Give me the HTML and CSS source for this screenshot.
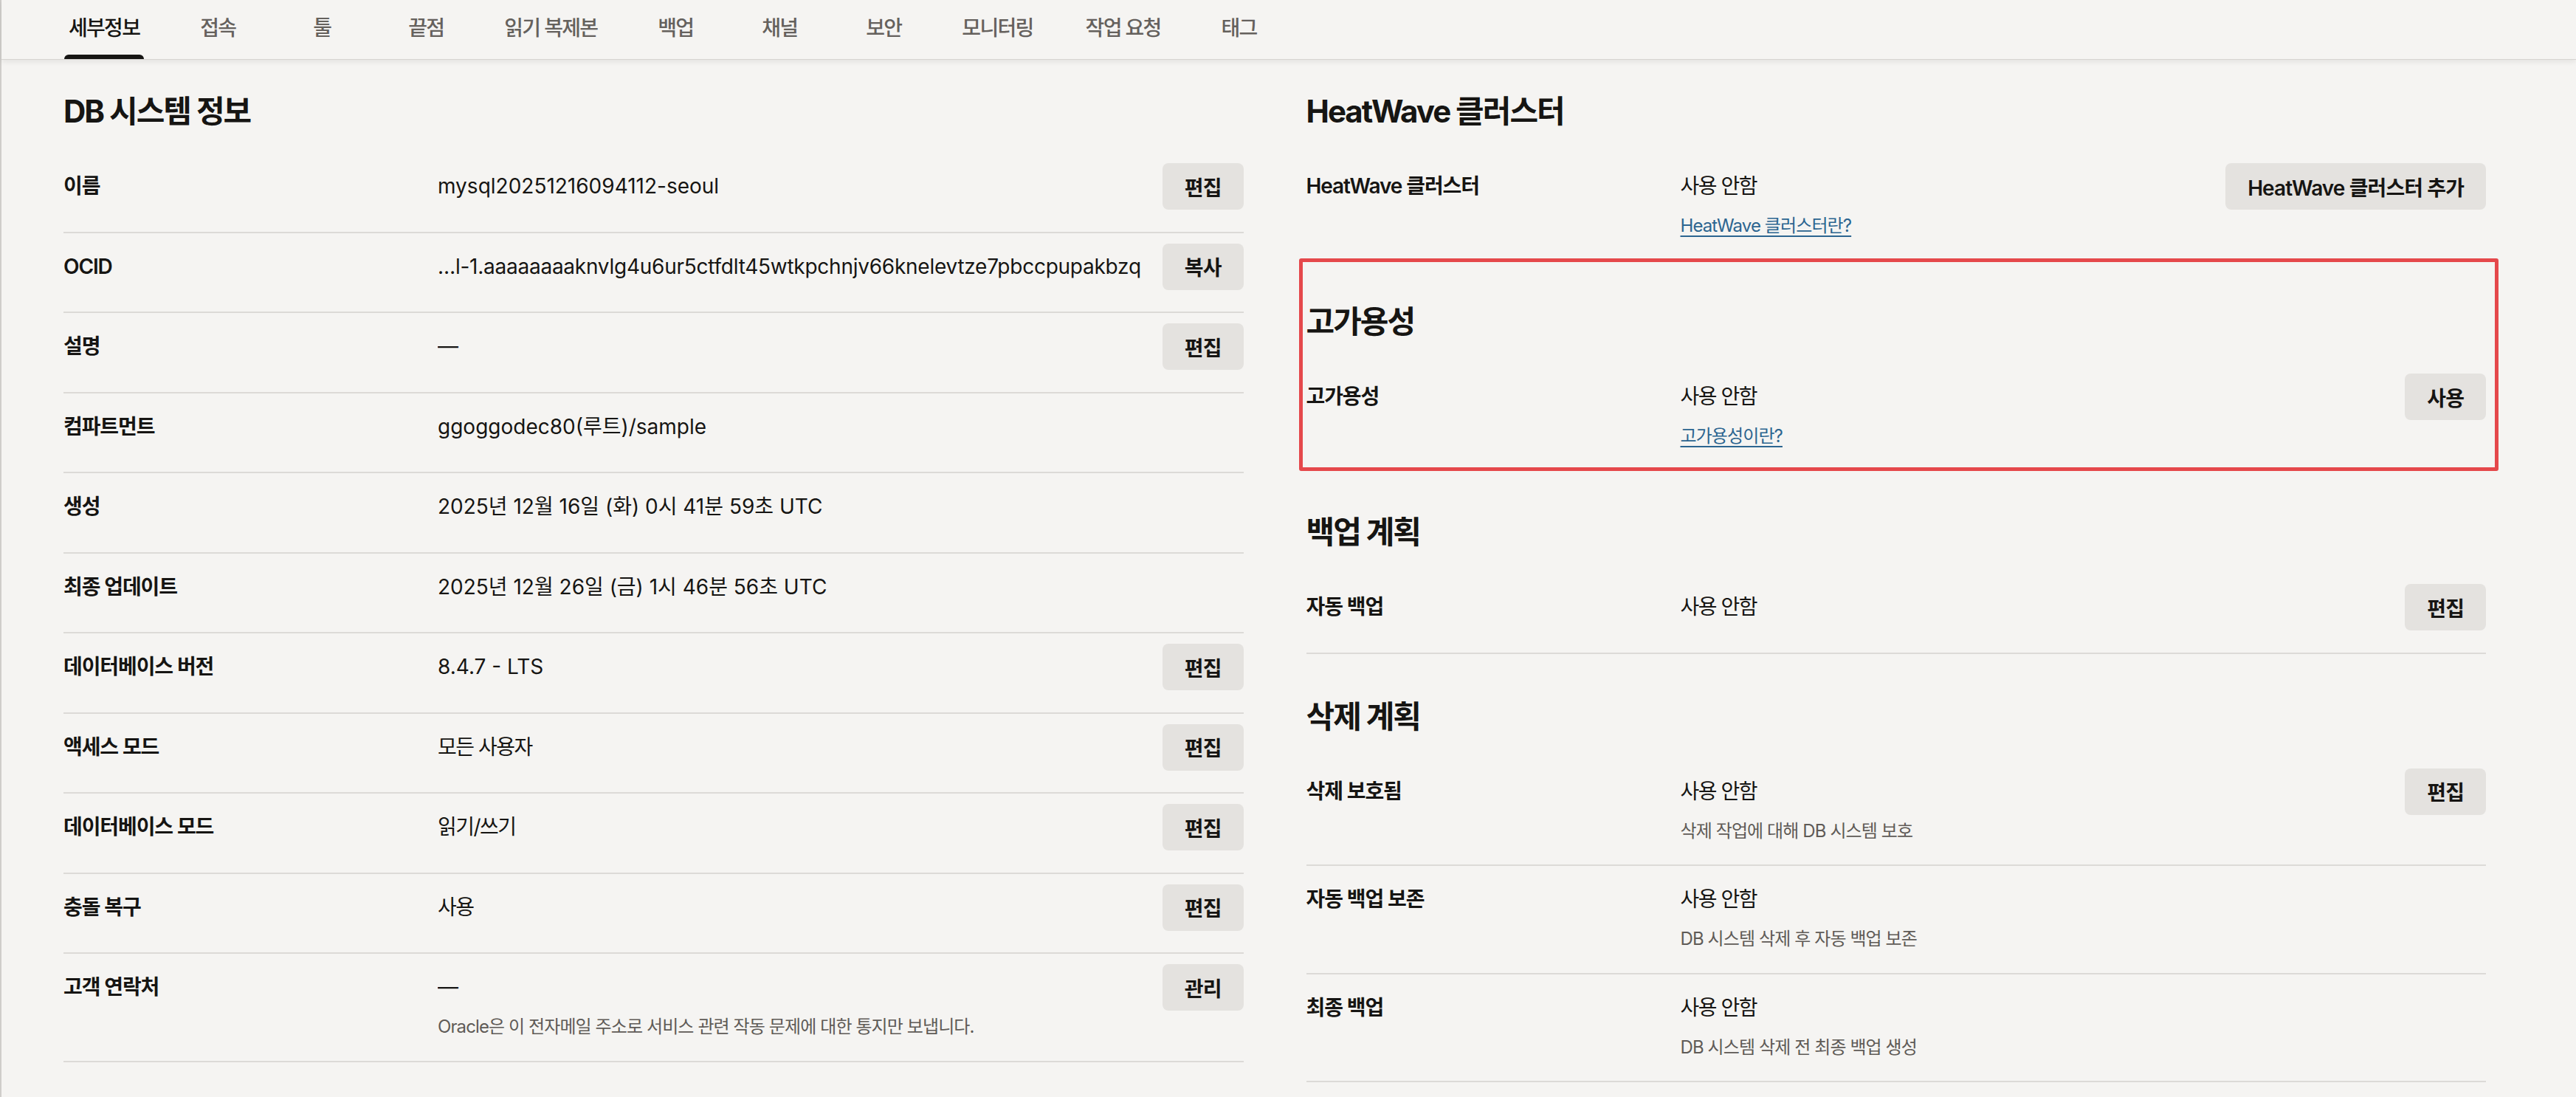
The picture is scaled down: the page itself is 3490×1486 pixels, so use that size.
FILE: index.html
```html
<!DOCTYPE html>
<html lang="ko">
<head>
<meta charset="utf-8">
<title>DB 시스템 세부정보</title>
<link rel="stylesheet" href="styles.css">
</head>
<body>
<div class="page">
  <nav class="tabs">
    <a class="tab active">세부정보</a>
    <a class="tab">접속</a>
    <a class="tab">툴</a>
    <a class="tab">끝점</a>
    <a class="tab">읽기 복제본</a>
    <a class="tab">백업</a>
    <a class="tab">채널</a>
    <a class="tab">보안</a>
    <a class="tab">모니터링</a>
    <a class="tab">작업 요청</a>
    <a class="tab">태그</a>
  </nav>

  <main class="content">
    <div class="col">
      <section class="section">
        <h2 class="heading">DB 시스템 정보</h2>
        <div class="row">
          <div class="label">이름</div>
          <div class="value"><div class="main">mysql20251216094112-seoul</div></div>
          <div class="action"><button class="btn">편집</button></div>
        </div>
        <div class="row">
          <div class="label">OCID</div>
          <div class="value"><div class="main ocid">…l-1.aaaaaaaaknvlg4u6ur5ctfdlt45wtkpchnjv66knelevtze7pbccpupakbzq</div></div>
          <div class="action"><button class="btn">복사</button></div>
        </div>
        <div class="row">
          <div class="label">설명</div>
          <div class="value"><div class="main">—</div></div>
          <div class="action"><button class="btn">편집</button></div>
        </div>
        <div class="row">
          <div class="label">컴파트먼트</div>
          <div class="value"><div class="main">ggoggodec80(루트)/sample</div></div>
        </div>
        <div class="row">
          <div class="label">생성</div>
          <div class="value"><div class="main">2025년 12월 16일 (화) 0시 41분 59초 UTC</div></div>
        </div>
        <div class="row">
          <div class="label">최종 업데이트</div>
          <div class="value"><div class="main">2025년 12월 26일 (금) 1시 46분 56초 UTC</div></div>
        </div>
        <div class="row">
          <div class="label">데이터베이스 버전</div>
          <div class="value"><div class="main">8.4.7 - LTS</div></div>
          <div class="action"><button class="btn">편집</button></div>
        </div>
        <div class="row">
          <div class="label">액세스 모드</div>
          <div class="value"><div class="main ko">모든 사용자</div></div>
          <div class="action"><button class="btn">편집</button></div>
        </div>
        <div class="row">
          <div class="label">데이터베이스 모드</div>
          <div class="value"><div class="main ko">읽기/쓰기</div></div>
          <div class="action"><button class="btn">편집</button></div>
        </div>
        <div class="row">
          <div class="label">충돌 복구</div>
          <div class="value"><div class="main ko">사용</div></div>
          <div class="action"><button class="btn">편집</button></div>
        </div>
        <div class="row">
          <div class="label">고객 연락처</div>
          <div class="value">
            <div class="main">—</div>
            <div class="desc">Oracle은 이 전자메일 주소로 서비스 관련 작동 문제에 대한 통지만 보냅니다.</div>
          </div>
          <div class="action"><button class="btn">관리</button></div>
        </div>
      </section>
    </div>

    <div class="col">
      <section class="section">
        <h2 class="heading">HeatWave 클러스터</h2>
        <div class="row noline">
          <div class="label">HeatWave 클러스터</div>
          <div class="value">
            <div class="main ko">사용 안함</div>
            <div class="desc"><a class="link">HeatWave 클러스터란?</a></div>
          </div>
          <div class="action"><button class="btn">HeatWave 클러스터 추가</button></div>
        </div>
      </section>

      <section class="section highlight">
        <h2 class="heading">고가용성</h2>
        <div class="row noline">
          <div class="label">고가용성</div>
          <div class="value">
            <div class="main ko">사용 안함</div>
            <div class="desc"><a class="link">고가용성이란?</a></div>
          </div>
          <div class="action"><button class="btn">사용</button></div>
        </div>
      </section>

      <section class="section">
        <h2 class="heading">백업 계획</h2>
        <div class="row">
          <div class="label">자동 백업</div>
          <div class="value"><div class="main ko">사용 안함</div></div>
          <div class="action"><button class="btn">편집</button></div>
        </div>
      </section>

      <section class="section">
        <h2 class="heading">삭제 계획</h2>
        <div class="row">
          <div class="label">삭제 보호됨</div>
          <div class="value">
            <div class="main ko">사용 안함</div>
            <div class="desc">삭제 작업에 대해 DB 시스템 보호</div>
          </div>
          <div class="action"><button class="btn">편집</button></div>
        </div>
        <div class="row">
          <div class="label">자동 백업 보존</div>
          <div class="value">
            <div class="main ko">사용 안함</div>
            <div class="desc">DB 시스템 삭제 후 자동 백업 보존</div>
          </div>
        </div>
        <div class="row">
          <div class="label">최종 백업</div>
          <div class="value">
            <div class="main ko">사용 안함</div>
            <div class="desc">DB 시스템 삭제 전 최종 백업 생성</div>
          </div>
        </div>
      </section>
    </div>
  </main>
</div>
</body>
</html>
```

FILE: styles.css
```css
* {
  box-sizing: border-box;
}

html, body {
  margin: 0;
  padding: 0;
  background: #f5f4f2;
}

body {
  font-family: Inter, "Noto Sans CJK KR", sans-serif;
  font-size: 28px;
  color: #161513;
}

.page {
  min-height: 1486px;
  border-left: 2px solid #cfcdca;
}

/* ---------- tabs ---------- */
.tabs {
  display: flex;
  gap: 59px;
  height: 81px;
  padding-left: 85px;
  border-bottom: 1px solid #d6d4d1;
  box-shadow: 0 3px 7px rgba(0, 0, 0, 0.07);
}

.tab {
  position: relative;
  min-width: 82px;
  padding: 0 6px;
  line-height: 76px;
  text-align: center;
  font-weight: 500;
  letter-spacing: -1.7px;
  color: #65615d;
  white-space: nowrap;
}

.tab.active {
  color: #161513;
}

.tab.active::after {
  content: "";
  position: absolute;
  left: 0;
  right: 0;
  bottom: 0;
  height: 6px;
  background: #161513;
  border-radius: 6px 6px 0 0;
}

/* ---------- content ---------- */
.content {
  display: grid;
  grid-template-columns: 1fr 1fr;
  column-gap: 85px;
  padding: 42px 122px 0 84px;
}

.section {
  position: relative;
  padding-top: 57px;
}

.col > .section:first-child {
  padding-top: 0;
}

.heading {
  margin: 0 0 28px;
  font-size: 42px;
  line-height: 56px;
  font-weight: 700;
  letter-spacing: -2px;
}

.row {
  display: grid;
  grid-template-columns: 507px 1fr auto;
  padding: 14px 0 29.5px;
  border-bottom: 2px solid #dcdad7;
}

.row.noline {
  border-bottom: 0;
  padding-bottom: 29px;
}

.label {
  line-height: 63px;
  font-weight: 600;
  letter-spacing: -1.1px;
  white-space: nowrap;
}

.value {
  min-width: 0;
}

.main {
  line-height: 63px;
  white-space: nowrap;
  overflow: hidden;
}

.main.ko {
  letter-spacing: -1.5px;
}

.main.ocid {
  letter-spacing: -0.25px;
}

.desc {
  margin-top: 6px;
  font-size: 24px;
  line-height: 32px;
  letter-spacing: -0.9px;
  color: #5f5b57;
}

.link {
  color: #2c6590;
  text-decoration: underline;
  text-decoration-thickness: 2px;
  text-underline-offset: 5px;
}

.action {
  padding-left: 14px;
}

.btn {
  height: 63px;
  padding: 0 30px;
  border: 0;
  border-radius: 8px;
  background: #e4e2df;
  font-family: inherit;
  font-size: 28px;
  font-weight: 600;
  letter-spacing: -0.9px;
  color: #161513;
  white-space: nowrap;
}

/* annotation box drawn over the 고가용성 section */
.highlight::after {
  content: "";
  position: absolute;
  top: -1px;
  bottom: -2px;
  left: -10px;
  right: -17px;
  border: 5px solid #e5484b;
  border-radius: 3px;
  pointer-events: none;
}
```
